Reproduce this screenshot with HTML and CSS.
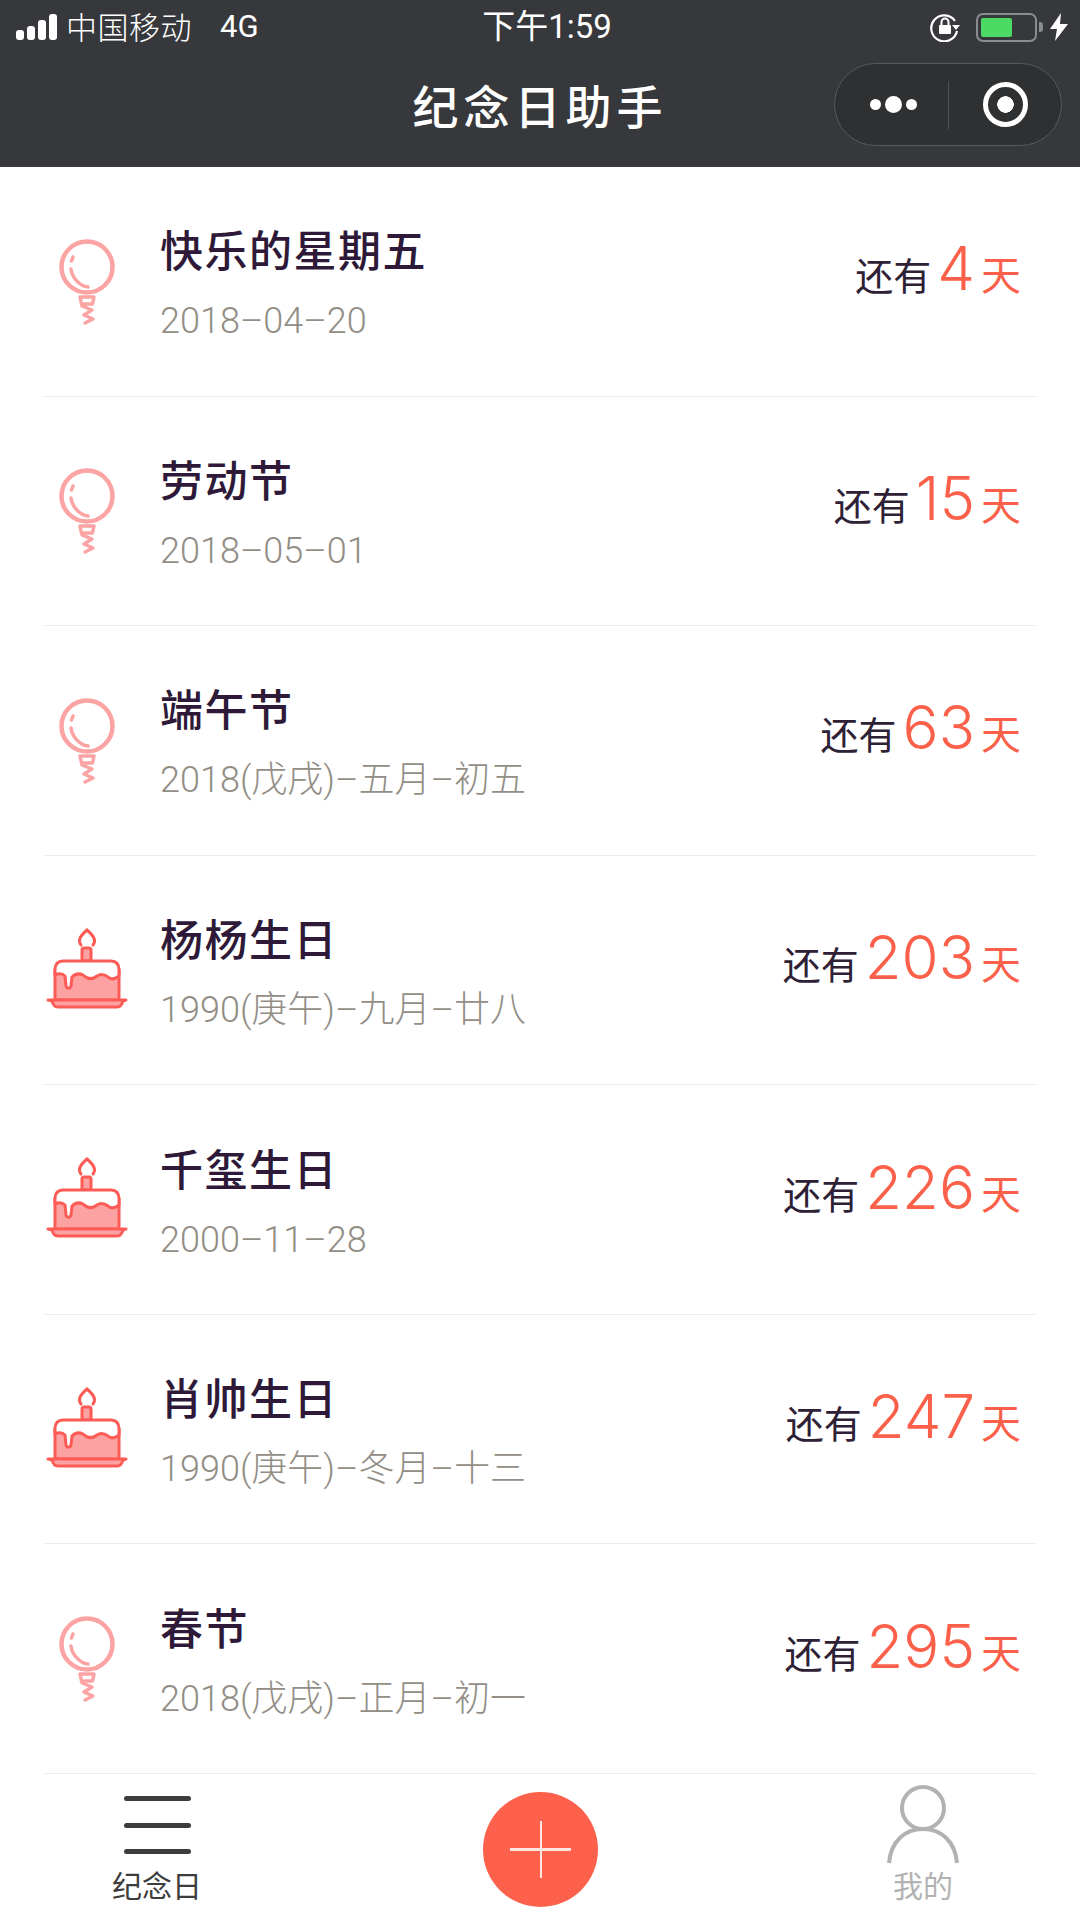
FILE: index.html
```html
<!DOCTYPE html>
<html lang="zh-CN">
<head>
    <meta charset="UTF-8">
    <meta name="viewport" content="width=device-width, initial-scale=1.0">
    <title>纪念日助手</title>
    <link rel="stylesheet" href="styles.css">
</head>
<body>
    <svg class="defs" width="0" height="0">
        <symbol id="balloon" viewBox="15 28 84 90">
            <circle cx="57" cy="57" r="25.500" fill="#fff" stroke="#fca3a4" stroke-width="4.500"/>
            <path d="M43 47l-1.500 4M41 59c1 8 8 17 17 18" fill="none" stroke="#fca3a4" stroke-width="3.500" stroke-linecap="round"/>
            <path d="M50 87h14l-1.500 7h-11z" fill="#fff" stroke="#fca3a4" stroke-width="3.500" stroke-linejoin="round"/>
            <path d="M52 96l10 4-8 5 9 4-8 4" fill="none" stroke="#fca3a4" stroke-width="3.500" stroke-linecap="round" stroke-linejoin="round"/>
        </symbol>
        <symbol id="cake" viewBox="16 16 84 84">
            <path d="M52 35c-3-4-2-8 6-15 8 7 9 11 6 15" fill="none" stroke="#fc5c55" stroke-width="3" stroke-linecap="round"/>
            <rect x="53" y="38" width="9" height="13" rx="2" fill="#fda2a2" stroke="#fc5c55" stroke-width="3"/>
            <path d="M26 60v30h64V60z" fill="#fda2a2" stroke="#fc5c55" stroke-width="3"/>
            <path d="M26 60c0-6 3-9 8-9h48c5 0 8 3 8 9v6c-4 3-8 4-11 1-4-3-8-3-11-1-5 4-10 3-14-1-4-2-8-1-11 2l-1 9c-1 3-4 3-5 0l-1-10c-3-3-6-3-10-1z" fill="#fff" stroke="#fc5c55" stroke-width="3" stroke-linejoin="round"/>
            <path d="M19 90h78l-3 1c-1 4-3 6-6 6H29c-3 0-5-2-6-6z" fill="#fda2a2" stroke="#fc5c55" stroke-width="3" stroke-linejoin="round"/>
        </symbol>
    </svg>

    <header class="top">
        <div class="status">
            <div class="status-left">
                <span class="signal"><i></i><i></i><i></i><i></i></span>
                <span class="carrier">中国移动</span>
                <span class="net">4G</span>
            </div>
            <span class="time">下午1:59</span>
            <div class="status-right">
                <svg class="lock" width="30" height="30" viewBox="0 0 30 30">
                    <path d="M25 9A13 13 0 1 0 27 19" fill="none" stroke="#fff" stroke-width="2.200"/>
                    <path d="M22 13h8l-4 5z" fill="#fff"/>
                    <rect x="9" y="13" width="12" height="9" rx="1" fill="#fff"/>
                    <path d="M11.500 13V10a3.500 3.500 0 0 1 7 0v3" fill="none" stroke="#fff" stroke-width="2"/>
                </svg>
                <span class="battery"><b></b></span>
                <span class="battery-cap"></span>
                <svg class="bolt" width="18" height="28" viewBox="0 0 18 28">
                    <path d="M11 0L0 16h7L5 28 18 11h-8z" fill="#fff"/>
                </svg>
            </div>
        </div>
        <div class="nav">
            <h1>纪念日助手</h1>
            <div class="capsule">
                <span class="dots"><i></i><i class="big"></i><i></i></span>
                <span class="capsule-line"></span>
                <span class="ring"></span>
            </div>
        </div>
    </header>

    <main class="list">
        <div class="row">
            <svg class="icon balloon"><use href="#balloon"/></svg>
            <div class="info"><h2>快乐的星期五</h2><p>2018–04–20</p></div>
            <div class="left">还有<strong>4</strong><em>天</em></div>
        </div>
        <div class="row">
            <svg class="icon balloon"><use href="#balloon"/></svg>
            <div class="info"><h2>劳动节</h2><p>2018–05–01</p></div>
            <div class="left">还有<strong>15</strong><em>天</em></div>
        </div>
        <div class="row">
            <svg class="icon balloon"><use href="#balloon"/></svg>
            <div class="info"><h2>端午节</h2><p>2018(戊戌)–五月–初五</p></div>
            <div class="left">还有<strong>63</strong><em>天</em></div>
        </div>
        <div class="row">
            <svg class="icon cake"><use href="#cake"/></svg>
            <div class="info"><h2>杨杨生日</h2><p>1990(庚午)–九月–廿八</p></div>
            <div class="left">还有<strong>203</strong><em>天</em></div>
        </div>
        <div class="row">
            <svg class="icon cake"><use href="#cake"/></svg>
            <div class="info"><h2>千玺生日</h2><p>2000–11–28</p></div>
            <div class="left">还有<strong>226</strong><em>天</em></div>
        </div>
        <div class="row">
            <svg class="icon cake"><use href="#cake"/></svg>
            <div class="info"><h2>肖帅生日</h2><p>1990(庚午)–冬月–十三</p></div>
            <div class="left">还有<strong>247</strong><em>天</em></div>
        </div>
        <div class="row">
            <svg class="icon balloon"><use href="#balloon"/></svg>
            <div class="info"><h2>春节</h2><p>2018(戊戌)–正月–初一</p></div>
            <div class="left">还有<strong>295</strong><em>天</em></div>
        </div>
    </main>

    <footer class="tabs">
        <div class="tab">
            <span class="menu"><i></i><i></i><i></i></span>
            <span class="tab-label">纪念日</span>
        </div>
        <div class="add"><i class="add-h"></i><i class="add-v"></i></div>
        <div class="tab tab-off">
            <svg class="person" width="72" height="80" viewBox="0 0 72 80">
                <circle cx="36" cy="23" r="21" fill="none" stroke="#b2b2b2" stroke-width="4"/>
                <path d="M2 78C4 56 18 44 36 44s32 12 34 34" fill="none" stroke="#b2b2b2" stroke-width="4"/>
            </svg>
            <span class="tab-label">我的</span>
        </div>
    </footer>
</body>
</html>
```

FILE: styles.css
```css
* {
    box-sizing: border-box;
}
html, body {
    height: 100%;
}
body {
    margin: 0;
    width: 1080px;
    height: 1920px;
    display: flex;
    flex-direction: column;
    background-color: #fff;
    font-family: Roboto, "Noto Sans CJK SC", sans-serif;
    overflow: hidden;
}
.defs {
    position: absolute;
}
i, em {
    font-style: normal;
}

/* top bars */
.top {
    height: 167px;
    background-color: #37383b;
    color: #fff;
    flex-shrink: 0;
}
.status {
    height: 54px;
    padding: 0 12px 0 16px;
    display: grid;
    grid-template-columns: 1fr auto 1fr;
    align-items: center;
}
.status-left, .status-right {
    display: flex;
    align-items: center;
}
.status-right {
    justify-content: flex-end;
}
.signal {
    display: flex;
    align-items: flex-end;
    gap: 3px;
    height: 26px;
    margin-right: 9px;
}
.signal i {
    width: 8px;
    background-color: #fff;
    border-radius: 3px;
}
.signal i:nth-child(1) { height: 10px; }
.signal i:nth-child(2) { height: 14px; }
.signal i:nth-child(3) { height: 20px; }
.signal i:nth-child(4) { height: 26px; }
.carrier {
    font-size: 31px;
    letter-spacing: 0.500px;
    font-weight: 300;
    position: relative;
    top: -2px;
}
.net {
    font-size: 31px;
    margin-left: 28px;
    position: relative;
    top: -1px;
}
.time {
    font-size: 33px;
    position: relative;
    left: 5px;
    top: -3px;
}
.lock {
    margin-right: 16px;
}
.battery {
    width: 61px;
    height: 29px;
    border: 2px solid #8b8c8e;
    border-radius: 7px;
    padding: 3px;
    display: flex;
}
.battery b {
    width: 31px;
    background-color: #4cd964;
    border-radius: 2px;
}
.battery-cap {
    width: 4px;
    height: 10px;
    margin-left: 2px;
    background-color: #8b8c8e;
    border-radius: 0 3px 3px 0;
}
.bolt {
    margin-left: 7px;
}
.nav {
    position: relative;
    height: 113px;
    display: flex;
    align-items: center;
    justify-content: center;
}
.nav h1 {
    margin: 0;
    font-size: 46px;
    font-weight: 500;
    letter-spacing: 5px;
    position: relative;
    top: -7px;
}
.capsule {
    position: absolute;
    left: 834px;
    top: 9px;
    width: 228px;
    height: 83px;
    border: 1px solid #58595b;
    border-radius: 42px;
    background-color: #2f3032;
    display: flex;
    align-items: center;
}
.dots {
    width: 113px;
    display: flex;
    align-items: center;
    justify-content: center;
    gap: 4px;
    padding-left: 3px;
}
.dots i {
    width: 11px;
    height: 11px;
    border-radius: 50%;
    background-color: #fff;
}
.dots i.big {
    width: 17px;
    height: 17px;
}
.capsule-line {
    width: 1px;
    height: 48px;
    background-color: #525355;
}
.ring {
    width: 45px;
    height: 45px;
    margin-left: 34px;
    border: 5px solid #fff;
    border-radius: 50%;
    background: radial-gradient(circle, #fff 0 8px, transparent 8.500px);
}

/* list */
.list {
    flex: 1;
    display: flex;
    flex-direction: column;
}
.row {
    flex: 1;
    margin: 0 44px;
    display: flex;
    align-items: center;
    border-bottom: 1px solid #efecec;
}
.icon {
    flex-shrink: 0;
    width: 84px;
    margin-left: 1px;
    margin-right: 31px;
}
.icon.balloon {
    height: 90px;
    margin-top: 3px;
}
.icon.cake {
    height: 84px;
    margin-top: -5px;
}
.info {
    flex: 1;
    padding-top: 7px;
}
.info h2 {
    margin: 0 0 21px;
    font-size: 43px;
    line-height: 52px;
    font-weight: 500;
    letter-spacing: 1.500px;
    color: #2e1a38;
}
.info p {
    margin: 0;
    font-size: 36px;
    line-height: 44px;
    font-weight: 300;
    color: #928e86;
}
.left {
    display: flex;
    align-items: baseline;
    padding-right: 15px;
    font-size: 38px;
    font-weight: 400;
    color: #2e2136;
    margin-top: -26px;
}
.left strong {
    font-family: Inter, Roboto, sans-serif;
    font-size: 60px;
    font-weight: 300;
    color: #fb614a;
    margin: 0 6px;
}
.left em {
    font-size: 40px;
    color: #fb614a;
}

/* bottom tabs */
.tabs {
    height: 146px;
    flex-shrink: 0;
    padding: 4px 43px 0;
    display: flex;
    justify-content: space-between;
    align-items: center;
    background-color: #fff;
}
.tab {
    width: 228px;
    height: 100%;
    display: flex;
    flex-direction: column;
    align-items: center;
    color: #3d3d3d;
}
.tab-off {
    color: #b2b2b2;
}
.menu {
    width: 67px;
    height: 58px;
    margin-top: 18px;
    display: flex;
    flex-direction: column;
    justify-content: space-between;
}
.menu i {
    height: 5px;
    background-color: #3d3d3d;
    border-radius: 3px;
}
.person {
    margin-top: 7px;
}
.tab-label {
    font-size: 30px;
    line-height: 36px;
    font-weight: 400;
    margin-top: 15px;
}
.tab-off .tab-label {
    margin-top: 4px;
}
.add {
    position: relative;
    width: 115px;
    height: 115px;
    border-radius: 50%;
    background-color: #fd614c;
}
.add-h {
    position: absolute;
    left: 27px;
    top: 56px;
    width: 61px;
    height: 3px;
    background-color: #fde5e0;
}
.add-v {
    position: absolute;
    left: 57px;
    top: 29px;
    width: 2px;
    height: 57px;
    background-color: #fde5e0;
}
```
